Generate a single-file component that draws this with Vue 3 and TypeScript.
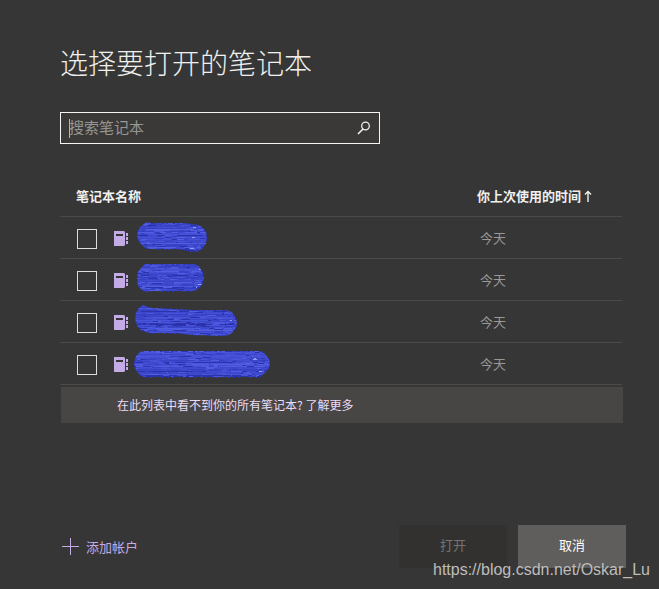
<script setup lang="ts">
import { ref } from 'vue'

interface Dash { x: number; y: number; w: number; fill: string }
interface Notebook { id: number; outline: string; right: number; lastUsed: string; dashes: Dash[] }

const query = ref('')
const selected = ref<number[]>([])

const shades = ['#3640c4', '#3d48cc', '#4650d8', '#525ee2', '#404bd0', '#2a32ac', '#4954dc', '#3a45c8']

// Streaks of a dry brush: rows of short horizontal dashes, broken up near the right tip.
function brush(seed: number, left: number, right: number): Dash[] {
  let state = seed
  const next = () => {
    state = (state * 16807) % 2147483647
    return state / 2147483647
  }
  const dashes: Dash[] = []
  for (let y = 0; y < 36; y++) {
    const base = Math.floor(next() * shades.length)
    let x = left
    while (x < right) {
      const tip = x > right - 20
      const w = tip ? 1 + Math.floor(next() * 4) : 1 + Math.floor(next() * 10)
      const pick = next() < 0.6 ? base : Math.floor(next() * shades.length)
      dashes.push({ x, y, w, fill: tip && next() < 0.02 ? '#8ea0ff' : shades[pick] })
      x += w
    }
  }
  return dashes
}

const notebooks: Notebook[] = [
  { id: 1, right: 207, outline: 'M137 18l1-5 2-4 4-3 2-2 5 1h32l7 1 9 1 4 3 3 4 1 5-1 6-3 5-4 3-6 1-9-2-9-1h-26l-5-2-4-4-2-4z' },
  { id: 2, right: 204, outline: 'M137 18l1-6 3-4 4-4h49l5 2 2 4 2 3 1 5-2 6-3 4-5 3h-43l-5 1-4-2-4-4z' },
  { id: 3, right: 237, outline: 'M135 17l1-6 3-5 4-3 5 2 4 1 20 1 19 1h35l6 2 3 5 2 5-1 5-3 5-4 3-6 1-27-1-25-2h-22l-8-3-4-4z' },
  { id: 4, right: 270, outline: 'M134 19l2-7 4-4 5-1h113l5 1 3 3 3 4 1 5-2 5-3 4-4 3-3 1H143l-4-3-3-4z' },
].map((item) => ({ ...item, lastUsed: '今天', dashes: brush(item.id * 7919, 133, item.right) }))
</script>

<template>
  <main class="dialog">
    <h1 class="title">选择要打开的笔记本</h1>

    <form class="search" role="search" @submit.prevent>
      <span class="caret" aria-hidden="true"></span>
      <input v-model="query" class="search-input" type="text" placeholder="搜索笔记本" aria-label="搜索笔记本" />
      <button class="search-button" type="submit" aria-label="搜索">
        <svg width="14" height="14" viewBox="0 0 14 14" fill="none" stroke="#f0f0ee">
          <circle cx="8.5" cy="5" r="3.8" stroke-width="1.3" />
          <path d="M6 8L1 13" stroke-width="1.6" />
        </svg>
      </button>
    </form>

    <table class="list">
      <thead>
        <tr>
          <th class="name-head" scope="col">笔记本名称</th>
          <th class="time-head" scope="col">
            <span class="sort">你上次使用的时间
              <svg width="8" height="13" viewBox="0 0 8 13" fill="none" stroke="#f0f0ee" aria-hidden="true">
                <path d="M4 12V1.5M1 4.5l3-3 3 3" stroke-width="1.4" />
              </svg>
            </span>
          </th>
        </tr>
      </thead>
      <tbody>
        <tr v-for="book in notebooks" :key="book.id">
          <td>
            <div class="book">
              <input v-model="selected" class="check" type="checkbox" :value="book.id" :aria-label="`笔记本 ${book.id}`" />
              <svg class="book-icon" width="15" height="15" viewBox="0 0 15 15" aria-hidden="true">
                <path d="M0 0h10l1 1v13l-1 1H0z" fill="#c3abe6" />
                <path d="M2 3h7v2H2z" fill="#353336" />
                <path d="M12 2h2v3h-2zM12 6h2v3h-2zM12 10h2v3h-2z" fill="#c3abe6" />
              </svg>
              <svg class="paint" width="140" height="36" viewBox="132 0 140 36" aria-hidden="true" shape-rendering="crispEdges">
                <clipPath :id="`brush-${book.id}`"><path :d="book.outline" /></clipPath>
                <g :clip-path="`url(#brush-${book.id})`">
                  <rect v-for="(dash, i) in book.dashes" :key="i" :x="dash.x" :y="dash.y" :width="dash.w" height="1" :fill="dash.fill" />
                </g>
                <path :d="book.outline" fill="none" stroke="#2c35b4" stroke-dasharray="2 3 1 5" />
              </svg>
            </div>
          </td>
          <td class="time">{{ book.lastUsed }}</td>
        </tr>
      </tbody>
    </table>

    <p class="note">在此列表中看不到你的所有笔记本? <a href="#more">了解更多</a></p>

    <footer class="footer">
      <button class="add" type="button">
        <svg width="17" height="17" viewBox="0 0 17 17" fill="#c3abe6" aria-hidden="true" shape-rendering="crispEdges">
          <path d="M8 0h1v17H8zM0 8h17v1H0z" />
        </svg>
        添加帐户
      </button>
      <div class="actions">
        <button class="action open" type="button" disabled>打开</button>
        <button class="action cancel" type="button">取消</button>
      </div>
    </footer>

    <div class="watermark">https://blog.csdn.net/Oskar_Lu</div>
  </main>
</template>

<style>
body {
  background: #363636;
}
</style>

<style scoped>
.dialog {
  position: relative;
  box-sizing: border-box;
  min-height: 100vh;
  padding: 41px 33px 21px 60px;
  display: flex;
  flex-direction: column;
  color: #f0f0ee;
  font-family: "Noto Sans CJK SC", sans-serif;
  font-size: 13px;
  line-height: 20px;
}
button,
input {
  margin: 0;
  padding: 0;
  border: 0;
  border-radius: 0;
  background: none;
  color: inherit;
  font: inherit;
}
.title {
  margin: 0;
  font-size: 28px;
  font-weight: 300;
  line-height: 42px;
}
.search {
  box-sizing: border-box;
  display: flex;
  align-items: center;
  width: 320px;
  max-width: 100%;
  height: 32px;
  margin-top: 29px;
  padding: 0 8px;
  border: 1px solid #f4f4f2;
  background: #3a3937;
}
.caret {
  width: 1px;
  height: 19px;
  margin-right: -1px;
  background: #b8b8b6;
}
.search-input {
  flex: 1;
  min-width: 0;
  height: 28px;
  padding-bottom: 4px;
  box-sizing: border-box;
  outline: none;
  font-size: 15px;
}
.search-input::placeholder {
  color: #969694;
  opacity: 1;
}
.search-button {
  display: flex;
}
.list {
  width: 100%;
  max-width: 562px;
  margin-top: 32px;
  border-collapse: separate;
  border-spacing: 0;
  table-layout: fixed;
}
th,
td {
  height: 41px;
  padding: 0;
  border-bottom: 1px solid #4a4a49;
  text-align: left;
}
th {
  height: 40px;
  font-weight: 700;
}
.name-head {
  padding-left: 16px;
}
.time-head {
  width: 145px;
}
.sort {
  display: flex;
  align-items: center;
  gap: 3px;
}
.time {
  padding-left: 3px;
  color: #989896;
}
.book {
  display: flex;
  align-items: center;
  padding: 2px 0 0 17px;
}
.check {
  appearance: none;
  box-sizing: border-box;
  width: 20px;
  height: 20px;
  border: 1px solid #dededc;
}
.check:checked {
  background: #c3abe6;
}
.book-icon {
  margin-left: 17px;
}
.paint {
  margin: -3px 0 3px 3px;
}
.note {
  box-sizing: border-box;
  max-width: 562px;
  margin: 2px 0 0 1px;
  padding: 8px 56px;
  background: #484644;
  color: #eadcf8;
  font-size: 12px;
}
.note a {
  color: inherit;
  text-decoration: none;
}
.footer {
  display: flex;
  align-items: center;
  justify-content: space-between;
  margin-top: auto;
  padding-left: 2px;
}
.add {
  display: flex;
  align-items: center;
  gap: 7px;
  color: #c3abe6;
}
.actions {
  display: flex;
  gap: 11px;
}
.action {
  width: 108px;
  height: 43px;
  padding-bottom: 4px;
}
.open {
  background: #32312f;
  color: #747472;
}
.cancel {
  background: #605e5c;
  color: #ffffff;
}
.watermark {
  position: absolute;
  right: 9px;
  bottom: 9px;
  color: #bdbdbc;
  font-family: "Liberation Sans", sans-serif;
  font-size: 16px;
  pointer-events: none;
}
</style>
